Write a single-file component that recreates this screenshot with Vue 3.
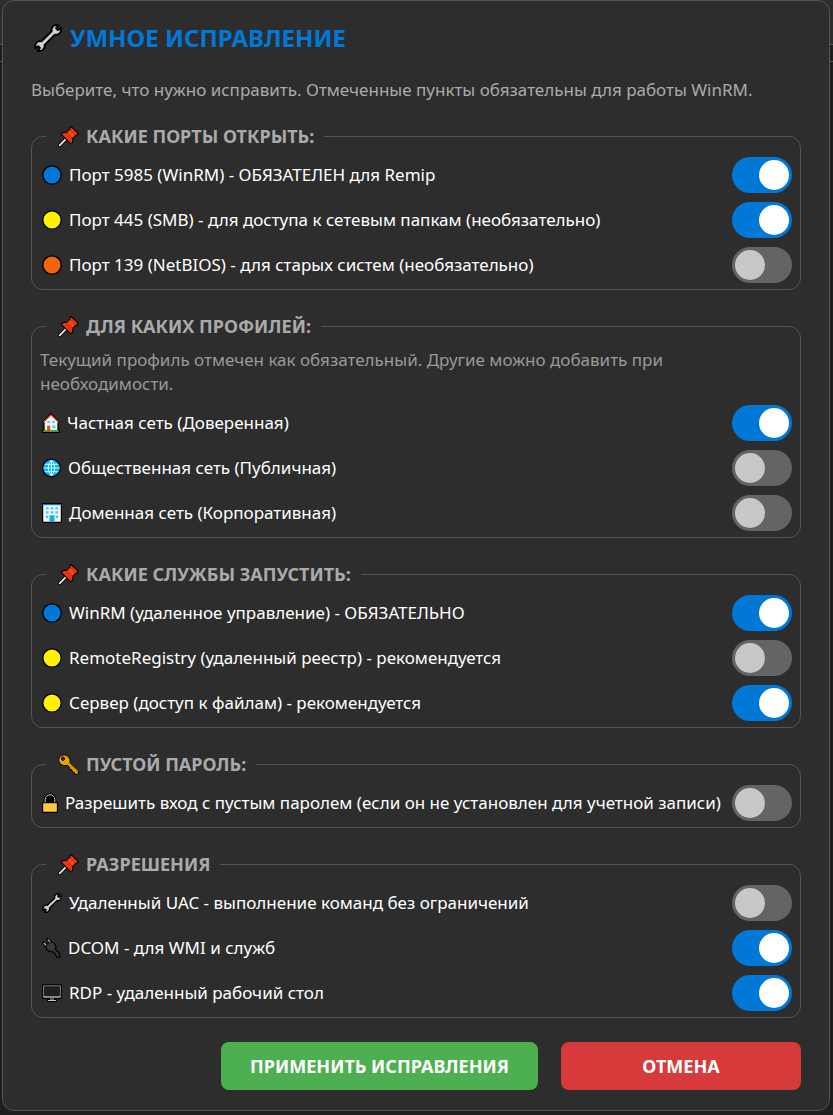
<script setup>
import { reactive } from 'vue';

const icons = {
  wrench: { w: 20, h: 20 },
  pin: { w: 21, h: 21 },
  key: { w: 21, h: 21 },
  dot: { w: 20, h: 20 },
  house: { w: 18, h: 20 },
  globe: { w: 19, h: 20 },
  office: { w: 20, h: 20 },
  lock: { w: 16, h: 20 },
  plug: { w: 19, h: 20 },
  monitor: { w: 20, h: 20 }
};

const groups = reactive([
  {
    title: 'КАКИЕ ПОРТЫ ОТКРЫТЬ:',
    icon: 'pin',
    items: [
      { id: 'port5985', icon: 'dot', color: '#0078d7', text: 'Порт 5985 (WinRM) - ОБЯЗАТЕЛЕН для Remip', on: true },
      { id: 'port445', icon: 'dot', color: '#fff100', text: 'Порт 445 (SMB) - для доступа к сетевым папкам (необязательно)', on: true },
      { id: 'port139', icon: 'dot', color: '#f7630c', text: 'Порт 139 (NetBIOS) - для старых систем (необязательно)', on: false }
    ]
  },
  {
    title: 'ДЛЯ КАКИХ ПРОФИЛЕЙ:',
    icon: 'pin',
    hint: 'Текущий профиль отмечен как обязательный. Другие можно добавить при необходимости.',
    items: [
      { id: 'private', icon: 'house', text: 'Частная сеть (Доверенная)', on: true },
      { id: 'public', icon: 'globe', text: 'Общественная сеть (Публичная)', on: false },
      { id: 'domain', icon: 'office', text: 'Доменная сеть (Корпоративная)', on: false }
    ]
  },
  {
    title: 'КАКИЕ СЛУЖБЫ ЗАПУСТИТЬ:',
    icon: 'pin',
    items: [
      { id: 'winrm', icon: 'dot', color: '#0078d7', text: 'WinRM (удаленное управление) - ОБЯЗАТЕЛЬНО', on: true },
      { id: 'registry', icon: 'dot', color: '#fff100', text: 'RemoteRegistry (удаленный реестр) - рекомендуется', on: false },
      { id: 'server', icon: 'dot', color: '#fff100', text: 'Сервер (доступ к файлам) - рекомендуется', on: true }
    ]
  },
  {
    title: 'ПУСТОЙ ПАРОЛЬ:',
    icon: 'key',
    items: [
      { id: 'blank', icon: 'lock', text: 'Разрешить вход с пустым паролем (если он не установлен для учетной записи)', on: false }
    ]
  },
  {
    title: 'РАЗРЕШЕНИЯ',
    icon: 'pin',
    items: [
      { id: 'uac', icon: 'wrench', text: 'Удаленный UAC - выполнение команд без ограничений', on: false },
      { id: 'dcom', icon: 'plug', text: 'DCOM - для WMI и служб', on: true },
      { id: 'rdp', icon: 'monitor', text: 'RDP - удаленный рабочий стол', on: true }
    ]
  }
]);
</script>

<template>
  <!-- shared icon shapes -->
  <svg class="sprite" aria-hidden="true">
    <symbol id="i-wrench" viewBox="0 0 20 20">
      <path d="M15 .8 17.6 1 15.8 3 17 4.3 19.2 2.6Q19.8 5.5 17.8 7 16.3 8 14.9 7.7L7.6 15Q8 17.2 6.2 18.6 4.4 19.8 2.6 19L4.2 17.1 3 15.9.9 17.2Q.3 14.9 2 13.1 3.6 11.8 5.3 12.3L12.6 5.2Q12.2 3.3 13.4 1.8 14.2 1 15 .8Z" fill="#d2d0ce" stroke="#000" stroke-width="1.4" stroke-linejoin="round" />
    </symbol>
    <symbol id="i-pin" viewBox="0 0 20 20">
      <path d="M1.5 18.5 8 12" stroke="#000" stroke-width="3.2" stroke-linecap="round" />
      <path d="M1.6 18.4 8.4 11.6" stroke="#f3f2f1" stroke-width="1.6" stroke-linecap="round" />
      <path d="M12.7.6 19.5 7.2 17.9 9 16.6 8.8 14 11.4Q15 14.7 12.5 17.2L2.9 7.7Q5.2 5.3 8.7 6.1L11.3 3.5 11 2.2Z" fill="#e8350f" stroke="#000" stroke-width="1" stroke-linejoin="round" />
      <path d="M8.7 6.3 11.6 3.6 16.4 8.5 13.8 11.2Z" fill="#f5441f" />
      <path d="m8.5 6.5 5.1 5M11.8 3.6l4.6 4.7" stroke="#b92b0c" stroke-width=".6" />
    </symbol>
    <symbol id="i-key" viewBox="0 0 20 20">
      <path fill-rule="evenodd" d="M2.2 2Q5.6-.7 9.4 2 12.6 5.2 11.4 8.4L19.4 15.8V19.3H16L15.6 17.4 13.6 17.2 13.3 15 11.3 14.8 11 12.6 9 10.8Q5 12.1 2.1 9.4-.8 5.6 2.2 2ZM3.6 3.4Q2.7 4.7 3.9 5.8 5.1 6.5 6.1 5.5 6.8 4.1 5.7 3.2 4.5 2.6 3.6 3.4Z" fill="#eaa300" stroke="#000" stroke-width=".9" stroke-linejoin="round" />
      <path d="m10.2 9.2 8 7.5" stroke="#a87300" stroke-width=".8" />
    </symbol>
    <symbol id="i-dot" viewBox="0 0 20 20">
      <circle cx="10" cy="10" r="9.2" fill="currentColor" stroke="#000" stroke-width="1.3" />
    </symbol>
    <symbol id="i-house" viewBox="0 0 18 20">
      <path d="M.7 19.3V17.2H2V10L.7 9 9 .8 17.3 9 16 10V17.2H17.3V19.3Z" fill="#f3f2f1" stroke="#000" stroke-width="1.3" stroke-linejoin="round" />
      <path d="M1.3 9.2 9 1.8 16.7 9.2" fill="none" stroke="#e8350f" stroke-width="1.2" />
      <path d="M1.2 17.2H16.8V18.8H1.2Z" fill="#13a10e" />
      <path d="M5.2 12.6H8.2V18H5.2Z" fill="#e8441f" />
      <path d="M5.2 8H8.2V10H5.2ZM10 8H13V10H10ZM10.4 12.6H13.4V15H10.4Z" fill="#50d5ff" />
    </symbol>
    <symbol id="i-globe" viewBox="0 0 19 20">
      <circle cx="9.5" cy="10" r="8.8" fill="#00b7f0" stroke="#000" stroke-width="1.2" />
      <path d="M9.5 2V18M1.5 10H17.5M3 6.3H16M3 13.7H16M9.5 2Q2.8 9.5 9.5 18M9.5 2Q16.2 9.5 9.5 18" fill="none" stroke="#d8f5ff" stroke-width="1" />
    </symbol>
    <symbol id="i-office" viewBox="0 0 20 20">
      <path d="M.6.6H19.4V19.4H.6Z" fill="#f3f2f1" stroke="#000" stroke-width="1.2" />
      <path d="M1 1H19V2.2H1Z" fill="#0078d7" />
      <path d="M4 4.2H6.6V6.6H4ZM8.7 4.2H11.3V6.6H8.7ZM13.4 4.2H16V6.6H13.4ZM4 8.2H6.6V10.6H4ZM8.7 8.2H11.3V10.6H8.7ZM13.4 8.2H16V10.6H13.4ZM4 12.4H6.2V15H4ZM13.8 12.4H16V15H13.8Z" fill="#31d2f7" />
      <path d="M7.3 12.2H12.7V19H7.3Z" fill="#2bbbe8" />
      <path d="M10 13V19" stroke="#0078d7" stroke-width=".8" />
    </symbol>
    <symbol id="i-lock" viewBox="0 0 16 20">
      <path d="M2.3 10V6.3Q2.7 1 8 .8 13.3 1 13.7 6.3V10Z" fill="#000" stroke="#000" />
      <path d="M3.2 10V6.4Q3.6 2 8 1.8 12.4 2 12.8 6.4V10" fill="none" stroke="#c8c6c4" stroke-width="1" />
      <path d="M.6 9.8H15.4V19.4H.6Z" fill="#ffc83d" stroke="#000" stroke-width="1.1" />
    </symbol>
    <symbol id="i-plug" viewBox="0 0 19 20">
      <path d="M1.6 4.8 4.4 7.6M5.6 1.5 8.4 4.3" stroke="#000" stroke-width="3" stroke-linecap="round" />
      <path d="M3 7.8 8.4 3 13.2 6.2Q14.8 9 13.6 11.6L17.2 14.8 18.2 19.2H14.6L13.6 16.4 11 13.8Q7.5 14.4 5.2 12Z" fill="#333" stroke="#000" stroke-width="1.2" stroke-linejoin="round" />
      <path d="M1.8 5 4 7.2M5.8 1.7 8 3.9" stroke="#d2d0ce" stroke-width="1.2" />
      <path d="m5.8 10 5.8-5M7.5 12l5.2-4.6" stroke="#555" stroke-width=".7" />
    </symbol>
    <symbol id="i-monitor" viewBox="0 0 20 20">
      <path d="M.6 1.8H19.4V15.4H14.4V18.6H5.6V15.4H.6Z" fill="#000" stroke="#000" stroke-width="1" />
      <path d="M1.6 2.8H18.4V14H1.6Z" fill="#1f1f1f" stroke="#8a8886" stroke-width=".9" />
      <path d="M1.2 14H18.8M6 17.5H14" stroke="#c8c6c4" stroke-width="1.1" />
      <path d="M8 15H12V17H8Z" fill="#605e5c" />
    </symbol>
  </svg>

  <div class="window">
    <div class="backdrop">
      <div class="backdrop-head"></div>
      <div class="backdrop-bar"></div>
    </div>
    <form class="dialog" @submit.prevent>
      <h1 class="title">
        <svg class="title-icon" viewBox="0 0 20 20" aria-hidden="true"><use href="#i-wrench" /></svg>
        <span>УМНОЕ ИСПРАВЛЕНИЕ</span>
      </h1>
      <p class="intro">Выберите, что нужно исправить. Отмеченные пункты обязательны для работы WinRM.</p>

      <fieldset v-for="group in groups" :key="group.title" class="group">
        <legend>
          <span class="legend-inner">
            <svg :width="icons[group.icon].w" :height="icons[group.icon].h" aria-hidden="true"><use :href="'#i-' + group.icon" /></svg>
            <span>{{ group.title }}</span>
          </span>
        </legend>
        <p v-if="group.hint" class="hint">{{ group.hint }}</p>
        <div v-for="item in group.items" :key="item.id" class="row">
          <label :for="item.id">
            <svg :width="icons[item.icon].w" :height="icons[item.icon].h" :style="{ color: item.color }" aria-hidden="true"><use :href="'#i-' + item.icon" /></svg>
            <span>{{ item.text }}</span>
          </label>
          <input :id="item.id" v-model="item.on" type="checkbox" class="toggle" />
        </div>
      </fieldset>

      <div class="actions">
        <button type="submit" class="btn apply">ПРИМЕНИТЬ ИСПРАВЛЕНИЯ</button>
        <button type="button" class="btn cancel">ОТМЕНА</button>
      </div>
    </form>
  </div>
</template>

<style>
body {
  background: #1e1e1e;
}
</style>

<style scoped>
.sprite {
  position: absolute;
  width: 0;
  height: 0;
}

.window {
  position: relative;
  padding: 0 3px 2px 2px;
  font-family: "Segoe UI", "Noto Sans", sans-serif;
  font-size: 17px;
  line-height: 24px;
  color: #fff;
}

/* main window peeking out behind the dialog */
.backdrop {
  position: absolute;
  top: 0;
  left: 0;
  right: 0;
}
.backdrop-head {
  height: 44px;
  background: #2d2d2d;
  border-bottom: 1px solid #555;
}
.backdrop-bar {
  height: 16px;
  border-bottom: 1px solid #555;
}

.dialog {
  position: relative;
  box-sizing: border-box;
  padding: 21px 28px 20px;
  background: #2d2d2d;
  border: 1px solid #555;
  border-radius: 12px;
}

.title {
  display: flex;
  align-items: center;
  gap: 8px;
  margin: 0;
  padding-left: 3px;
  font-size: 24px;
  line-height: 32px;
  font-weight: bold;
  color: #0078d7;
}
.title-icon {
  width: 28px;
  height: 28px;
}

.intro {
  margin: 24px 0 22px;
  color: #aaa;
}

/* Groups */
.group {
  min-width: 0;
  margin: 0 0 24px;
  padding: 4px 8px 2px;
  border: 1px solid #555;
  border-radius: 12px;
}
.group legend {
  margin-left: 6px;
  padding: 0 10px 0 12px;
  font-size: 18px;
  font-weight: bold;
  color: #aaa;
}
.legend-inner {
  display: flex;
  align-items: center;
  gap: 7px;
}

.hint {
  margin: 6px 0 4px;
  color: #999;
}

.row {
  display: flex;
  align-items: center;
  justify-content: space-between;
  min-height: 45px;
}
.row label {
  display: flex;
  align-items: center;
  gap: 7px;
  flex: 1;
  padding-left: 2px;
}
.row svg,
.legend-inner svg {
  flex: none;
}

.toggle {
  appearance: none;
  flex: none;
  width: 60px;
  height: 36px;
  margin: 0;
  padding: 3px;
  box-sizing: border-box;
  display: flex;
  border-radius: 18px;
  background: #646464;
  cursor: pointer;
}
.toggle::before {
  content: "";
  width: 30px;
  height: 30px;
  border-radius: 50%;
  background: #c8c8c8;
}
.toggle:checked {
  justify-content: flex-end;
  background: #0078d7;
}
.toggle:checked::before {
  background: #fff;
}

/* Buttons */
.actions {
  display: flex;
  justify-content: flex-end;
  gap: 23px;
}
.btn {
  min-width: 240px;
  height: 48px;
  padding: 0 29px;
  border: none;
  border-radius: 8px;
  font: inherit;
  font-size: 18px;
  font-weight: bold;
  color: #fff;
  cursor: pointer;
}
.apply {
  background: #4caf50;
}
.cancel {
  background: #d63a3a;
}
</style>
